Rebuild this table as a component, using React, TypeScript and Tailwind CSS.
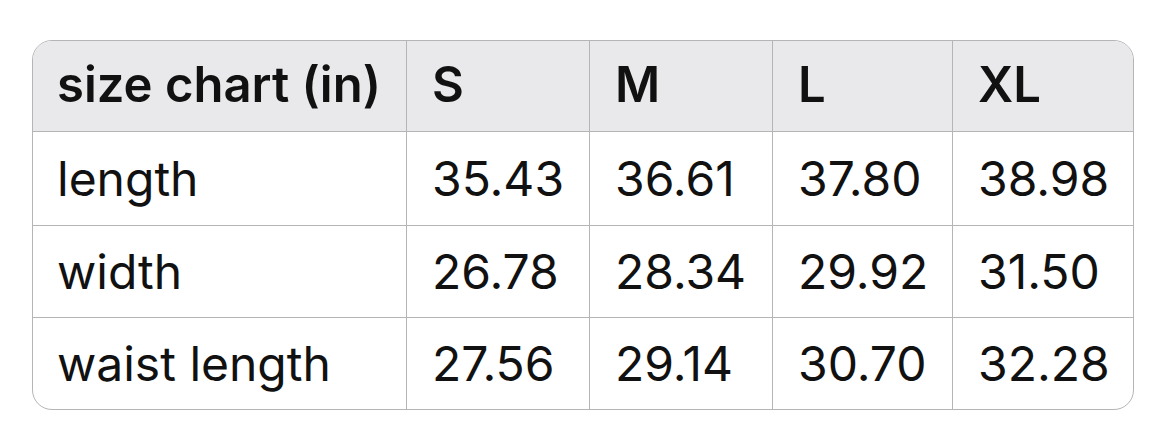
import React from "react";

const sizes = ["S", "M", "L", "XL"];

const rows = [
  { label: "length", values: ["35.43", "36.61", "37.80", "38.98"] },
  { label: "width", values: ["26.78", "28.34", "29.92", "31.50"] },
  { label: "waist length", values: ["27.56", "29.14", "30.70", "32.28"] },
];

const cols = "grid grid-cols-[373px_183px_183px_180px_181px]";

const App: React.FC = () => {
  return (
    <div className="min-h-screen bg-white pt-[40px] pl-[32px] font-['Inter',sans-serif] text-[#111111]">
      <div className="w-[1102px] overflow-hidden rounded-[20px] border border-[#b5b5b7]">
        <div className={`${cols} h-[90px] bg-[#e9e9eb] text-[49px] font-semibold`}>
          <div className="flex items-center pl-[24px] pb-[2px]">size chart (in)</div>
          {sizes.map((s) => (
            <div key={s} className="flex items-center border-l border-[#b5b5b7] pl-[25px] pb-[2px]">
              {s}
            </div>
          ))}
        </div>
        {rows.map((row, i) => (
          <div
            key={row.label}
            className={`${cols} border-t border-[#b5b5b7] text-[48px] ${i === 0 ? "h-[94px]" : "h-[92px]"}`}
          >
            <div className="flex items-center pl-[24px]">{row.label}</div>
            {row.values.map((v) => (
              <div key={v} className="flex items-center border-l border-[#b5b5b7] pl-[25px]">
                {v}
              </div>
            ))}
          </div>
        ))}
      </div>
    </div>
  );
};

export default App;
